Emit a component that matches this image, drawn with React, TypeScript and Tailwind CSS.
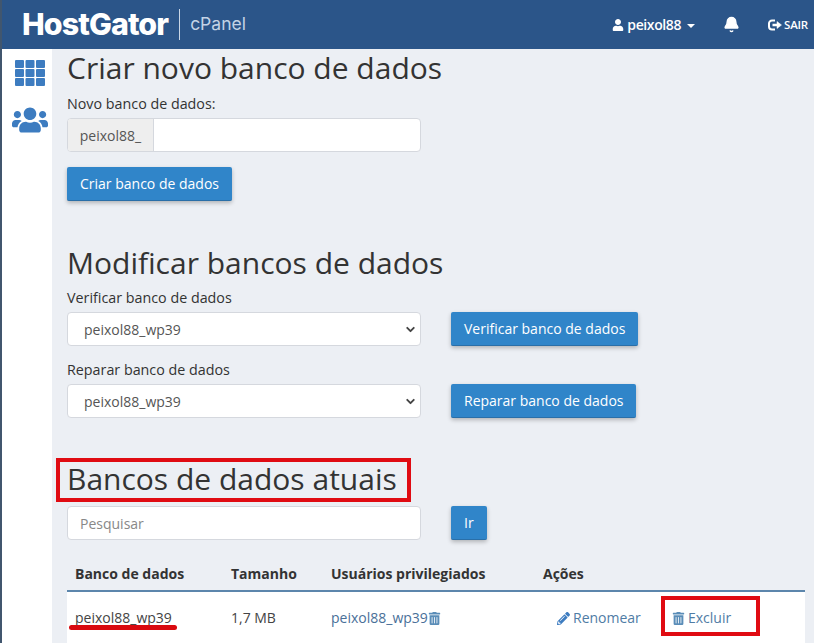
import { Bell, ChevronDown } from "lucide-react";
import { FaPencilAlt, FaTrashAlt, FaUser, FaUsers } from "react-icons/fa";

function Select() {
  return (
    <div className="relative flex h-[34px] w-[354px] items-center rounded-[4px] border border-[#d5d8de] bg-white pl-[16px] text-[14px] text-[#555]">
      peixol88_wp39
      <ChevronDown size={13} strokeWidth={3.5} className="absolute right-[3px] top-[10px] text-[#444]" />
    </div>
  );
}

function Button({ label }: { label: string }) {
  return (
    <button className="h-[34px] rounded-[2px] border-b border-[#2a6fa8] bg-[#3085c9] px-[13px] text-[14px] text-white shadow-[0_2px_4px_rgba(0,0,0,0.25)]">
      {label}
    </button>
  );
}

function GridIcon() {
  const cells = [0, 1, 2, 3, 4, 5, 6, 7, 8];
  return (
    <svg width="30" height="26" viewBox="0 0 30 26" fill="#3d7cc0">
      {cells.map((c) => (
        <rect key={c} x={(c % 3) * 10.5} y={Math.floor(c / 3) * 9} width="9" height="8" rx="1" />
      ))}
    </svg>
  );
}

function LogoutIcon() {
  return (
    <svg width="14" height="12" viewBox="0 0 14 12" fill="none" stroke="white">
      <path d="M7 1.5H4a3 3 0 0 0-3 3v3a3 3 0 0 0 3 3h3" strokeWidth="2" />
      <path d="M4.5 6H10" strokeWidth="2.5" />
      <path d="M9 2.5L13.5 6L9 9.5Z" fill="white" strokeWidth="0.5" />
    </svg>
  );
}

export default function App() {
  return (
    <div className="flex h-[643px] w-[814px] flex-col overflow-hidden bg-white font-['Open_Sans',sans-serif] text-[#333]">
      <header className="flex h-[49px] shrink-0 items-center border-l-[2px] border-[#41566e] bg-[#2b5589] text-white">
        <div className="ml-[20px] font-['Inter',sans-serif] text-[30.4px] font-extrabold tracking-[-0.9px]">HostGator</div>
        <div className="ml-[11px] h-[31px] w-px bg-[#c9d6e6]" />
        <div className="ml-[10px] font-['Inter',sans-serif] text-[17.5px] text-[#c3d3e6]">cPanel</div>
        <div className="ml-auto flex items-center">
          <FaUser size={12} />
          <span className="ml-[3px] text-[14px] font-semibold leading-[20px] tracking-[-0.4px]">peixol88</span>
          <span className="ml-[6px] mt-[2px] h-0 w-0 border-x-[4.5px] border-t-[4px] border-x-transparent border-t-white" />
          <Bell size={17} fill="white" className="ml-[28px]" />
          <span className="ml-[28px]"><LogoutIcon /></span>
          <span className="ml-[2px] mr-[6px] text-[11.5px] font-semibold tracking-[-0.2px]">SAIR</span>
        </div>
      </header>
      <div className="flex min-h-0 flex-1">
        <aside className="flex w-[52px] shrink-0 flex-col items-start border-l-[2px] border-[#41566e] pl-[13px] pt-[11px]">
          <GridIcon />
          <FaUsers size={36} color="#3d7cc0" className="-ml-[3px] mt-[16px]" />
        </aside>
        <main className="flex-1 bg-[#eceff4] pl-[15px]">
          <h1 className="text-[30px] leading-[38px]">Criar novo banco de dados</h1>
          <label className="mt-[7px] block text-[14.3px] font-medium leading-[20px]">Novo banco de dados:</label>
          <div className="mt-[4px] flex h-[34px] w-[354px] overflow-hidden rounded-[4px] border border-[#d5d8de] bg-white text-[14px]">
            <span className="flex w-[86px] items-center justify-center border-r border-[#d5d8de] bg-[#eeeeee] text-[#555]">peixol88_</span>
          </div>
          <div className="mt-[15px]"><Button label="Criar banco de dados" /></div>

          <h1 className="mt-[43px] text-[30px] leading-[38px]">Modificar bancos de dados</h1>
          <label className="mt-[6px] block text-[14.3px] leading-[20px]">Verificar banco de dados</label>
          <div className="mt-[4px] flex gap-[30px]">
            <Select />
            <Button label="Verificar banco de dados" />
          </div>
          <label className="mt-[14px] block text-[14.3px] leading-[20px]">Reparar banco de dados</label>
          <div className="mt-[4px] flex gap-[30px]">
            <Select />
            <Button label="Reparar banco de dados" />
          </div>

          <div className="relative mt-[42px]">
            <h1 className="text-[30px] leading-[38px]">Bancos de dados atuais</h1>
            <div className="absolute left-[-11px] top-[-2px] h-[44px] w-[355px] border-[4px] border-[#e00b12]" />
          </div>
          <div className="mt-[8px] flex gap-[30px]">
            <div className="flex h-[34px] w-[354px] items-center rounded-[4px] border border-[#d5d8de] bg-white pl-[12px] text-[14px] text-[#888]">Pesquisar</div>
            <Button label="Ir" />
          </div>
          <div className="mt-[17px] flex h-[35px] w-[738px] items-center border-b-[2px] border-[#5c86ac] text-[14px] font-bold">
            <span className="ml-[8px] w-[156px]">Banco de dados</span>
            <span className="w-[100px]">Tamanho</span>
            <span className="w-[212px]">Usuários privilegiados</span>
            <span>Ações</span>
          </div>
          <div className="flex h-[60px] w-[738px] items-start bg-white pt-[16px] text-[14px] leading-[20px]">
            <span className="relative ml-[8px] w-[156px] text-[#444]">
              peixol88_wp39
              <span className="absolute left-[-6px] top-[17px] h-[5px] w-[108px] rounded-full bg-[#d90a10]" />
            </span>
            <span className="w-[100px] text-[#444]">1,7 MB</span>
            <span className="flex w-[225px] items-center text-[#4a7099]">
              peixol88_wp39<FaTrashAlt size={13} className="text-[#5a8db8]" />
            </span>
            <span className="ml-px flex w-[115px] items-center text-[#4f7ca5]">
              <FaPencilAlt size={13} className="mr-[3px] text-[#3d7cc0]" />Renomear
            </span>
            <span className="relative flex items-center text-[#4f7ca5]">
              <FaTrashAlt size={13} className="mr-[3px] text-[#5a8db8]" />Excluir
              <span className="absolute left-[-11px] top-[-12px] h-[40px] w-[99px] border-[4px] border-[#e00b12]" />
            </span>
          </div>
        </main>
      </div>
    </div>
  );
}
